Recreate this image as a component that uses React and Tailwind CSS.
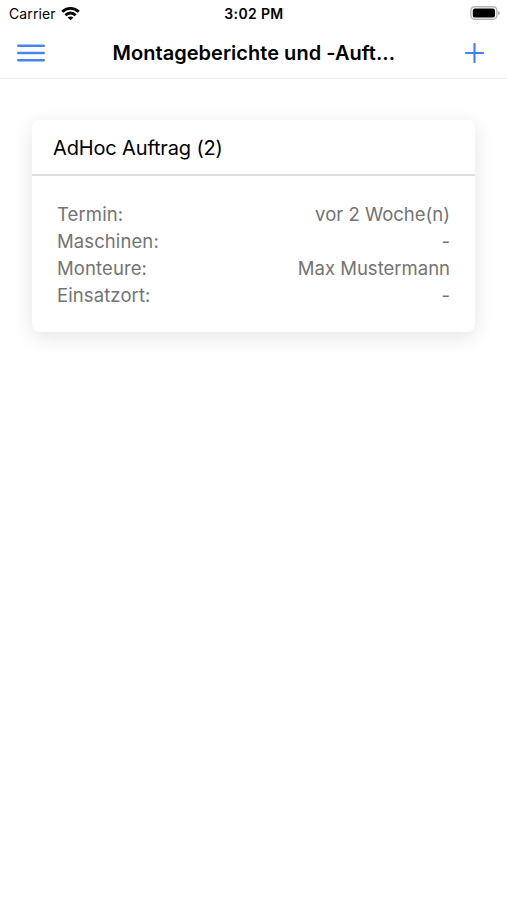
const rows = [
  ['Termin:', 'vor 2 Woche(n)'],
  ['Maschinen:', '-'],
  ['Monteure:', 'Max Mustermann'],
  ['Einsatzort:', '-'],
];

function StatusBar() {
  return (
    <div className="grid h-[27px] grid-cols-3 items-center pl-[9px] pr-[7px] text-[14px]">
      <div className="flex items-center gap-[5px]">
        <span className="tracking-[0.1px]">Carrier</span>
        <svg width="19" height="15" viewBox="0 0 19 15" fill="none" stroke="#000" strokeWidth="2.9">
          <path d="M1.2 5.8C5.8 1.2 13.2 1.2 17.8 5.8" />
          <path d="M4.4 9.2c2.9-2.9 7.3-2.9 10.2 0" />
          <path d="M9.5 14.3 6.7 11.5c1.6-1.5 4-1.5 5.6 0Z" fill="#000" stroke="none" />
        </svg>
      </div>
      <span className="whitespace-nowrap pr-[1px] text-center font-semibold tracking-[0.35px]">3:02 PM</span>
      <svg className="mb-px justify-self-end" width="30" height="14" viewBox="0 0 30 14">
        <rect x=".9" y=".7" width="26" height="12.6" rx="3.8" fill="none" stroke="#b5b5b5" strokeWidth="1.4" />
        <rect x="2.8" y="2.4" width="22.2" height="9.2" rx="2.2" />
        <path d="M28.2 4.8c2 .8 2 3.6 0 4.4Z" fill="#a3a3a3" />
      </svg>
    </div>
  );
}

export default function App() {
  return (
    <main className="min-h-screen bg-white font-['Inter','Liberation_Sans',sans-serif] text-black">
      <StatusBar />
      <header className="flex h-[52px] items-center justify-between border-b border-[#ebebeb] pl-[17px] pr-[23px]">
        <svg width="28" height="20" viewBox="0 0 28 20" stroke="#4785ee" strokeWidth="2.4" strokeLinecap="round">
          <path d="M1.2 2.7h25.6M1.2 10h25.6M1.2 17.3h25.6" />
        </svg>
        <h1 className="w-[285px] whitespace-nowrap text-[20px] font-semibold tracking-[0.03px]">Montageberichte und -Auft...</h1>
        <svg width="19" height="20" viewBox="0 0 19 20" stroke="#3c80f6" strokeWidth="2.1" strokeLinecap="round">
          <path d="M1 10h17M9.5 1v18" />
        </svg>
      </header>
      <section className="mx-8 mt-[41px] h-[212px] rounded-lg bg-white shadow-[0_5px_20px_rgba(0,0,0,0.11)]">
        <h2 className="flex h-[56px] items-center border-b-2 border-[#dfdfdf] pl-[21px] pt-[2px] text-[20px] tracking-[-0.15px]">AdHoc Auftrag (2)</h2>
        <dl className="px-[25px] pt-[25px] text-[18.5px] leading-[27px] text-[#737373]">
          {rows.map(([label, value]) => (
            <div key={label} className="flex justify-between">
              <dt className="tracking-[0.1px]">{label}</dt>
              <dd>{value}</dd>
            </div>
          ))}
        </dl>
      </section>
    </main>
  );
}
